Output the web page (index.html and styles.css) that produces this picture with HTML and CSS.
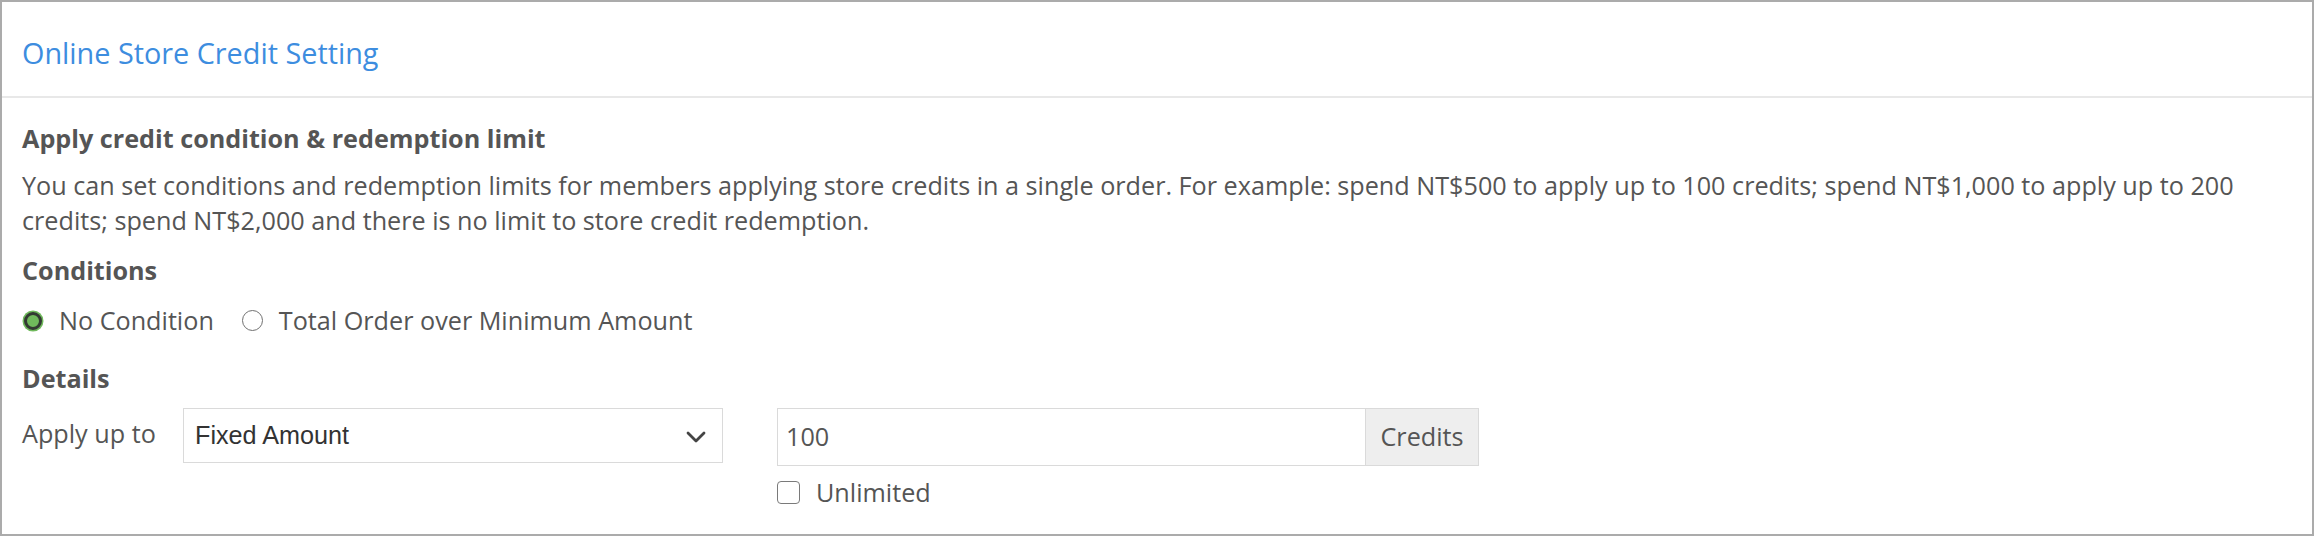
FILE: index.html
```html
<!DOCTYPE html>
<html lang="en">
<head>
<meta charset="utf-8">
<title>Online Store Credit Setting</title>
<link rel="stylesheet" href="styles.css">
</head>
<body>
<div class="panel">
  <div class="panel-header">
    <h2 class="panel-title">Online Store Credit Setting</h2>
  </div>
  <div class="panel-body">
    <h3 class="section-title">Apply credit condition &amp; redemption limit</h3>
    <p class="desc">You can set conditions and redemption limits for members applying store credits in a single order. For example: spend NT$500 to apply up to 100 credits; spend NT$1,000 to apply up to 200 credits; spend NT$2,000 and there is no limit to store credit redemption.</p>

    <h4 class="field-label">Conditions</h4>
    <div class="radio-group">
      <label class="radio">
        <span class="radio-dot is-checked"></span>
        <span class="radio-text">No Condition</span>
      </label>
      <label class="radio">
        <span class="radio-dot"></span>
        <span class="radio-text">Total Order over Minimum Amount</span>
      </label>
    </div>

    <h4 class="field-label details-label">Details</h4>
    <div class="detail-row">
      <span class="row-label">Apply up to</span>
      <div class="select">
        <span class="select-value">Fixed Amount</span>
        <svg class="chevron" width="20" height="12" viewBox="0 0 20 12" aria-hidden="true">
          <path d="M2 2 L10 10 L18 2" fill="none" stroke="#444" stroke-width="2.8" stroke-linecap="round" stroke-linejoin="round"/>
        </svg>
      </div>
      <div class="amount-col">
        <div class="input-group">
          <span class="input-value">100</span>
          <span class="addon">Credits</span>
        </div>
        <label class="check">
          <span class="check-box"></span>
          <span class="check-text">Unlimited</span>
        </label>
      </div>
    </div>
  </div>
</div>
</body>
</html>
```

FILE: styles.css
```css
* {
  box-sizing: border-box;
}

html, body {
  margin: 0;
  padding: 0;
  background: #ffffff;
}

body {
  font-family: "Open Sans", "Noto Sans", sans-serif;
  color: #555555;
  font-size: 25.2px;
  line-height: 35px;
}

.panel {
  width: 2314px;
  height: 536px;
  border: 2px solid #ababab;
  background: #ffffff;
}

.panel-header {
  padding: 31px 20px 23px;
  border-bottom: 2px solid #e8e8e8;
}

.panel-title {
  margin: 0;
  font-size: 28.8px;
  line-height: 40px;
  font-weight: 400;
  color: #3d8ddf;
}

.panel-body {
  padding: 23px 20px 0;
}

.section-title {
  margin: 0;
  font-size: 25.2px;
  line-height: 35px;
  font-weight: 700;
}

.desc {
  margin: 12px 0 0;
  padding-right: 20px;
}

.field-label {
  margin: 15px 0 0;
  font-size: 25.2px;
  line-height: 35px;
  font-weight: 700;
}

.details-label {
  margin-top: 23px;
}

.radio-group {
  display: flex;
  align-items: center;
  gap: 27px;
  margin-top: 15px;
}

.radio {
  display: flex;
  align-items: center;
  gap: 16px;
}

.radio-dot {
  width: 21px;
  height: 21px;
  border-radius: 50%;
  border: 1.8px solid #707070;
  background: #ffffff;
  flex: none;
  margin-left: 1px;
}

.radio-dot.is-checked {
  width: 18px;
  height: 18px;
  margin: 0 1px 0 2px;
  border: 3px solid #333a33;
  background: #70b95c;
  box-shadow: 0 0 0 1.5px #70b95c;
}

.detail-row {
  display: flex;
  align-items: flex-start;
  margin-top: 12px;
}

.row-label {
  width: 161px;
  flex: none;
  margin-top: 8px;
}

.select {
  width: 540px;
  height: 55px;
  flex: none;
  display: flex;
  align-items: center;
  justify-content: space-between;
  padding: 0 16px 0 11px;
  border: 1px solid #dadada;
  background: #ffffff;
  font-family: "Liberation Sans", Arial, sans-serif;
  font-size: 25.2px;
  color: #333333;
}

.chevron {
  display: block;
  margin-top: 2px;
}

.amount-col {
  margin-left: 54px;
  display: flex;
  flex-direction: column;
}

.input-group {
  display: flex;
  width: 702px;
  height: 57.5px;
  border: 1px solid #dadada;
}

.input-value {
  flex: 1;
  display: flex;
  align-items: center;
  padding-left: 8px;
  color: #555555;
}

.addon {
  width: 113px;
  flex: none;
  display: flex;
  align-items: center;
  justify-content: center;
  background: #eeeeee;
  border-left: 1px solid #dadada;
  color: #555555;
}

.check {
  display: flex;
  align-items: center;
  gap: 16px;
  margin-top: 9px;
}

.check-box {
  width: 23px;
  height: 23px;
  flex: none;
  border: 1.5px solid #7a7a7a;
  border-radius: 4px;
  background: #ffffff;
}
```
